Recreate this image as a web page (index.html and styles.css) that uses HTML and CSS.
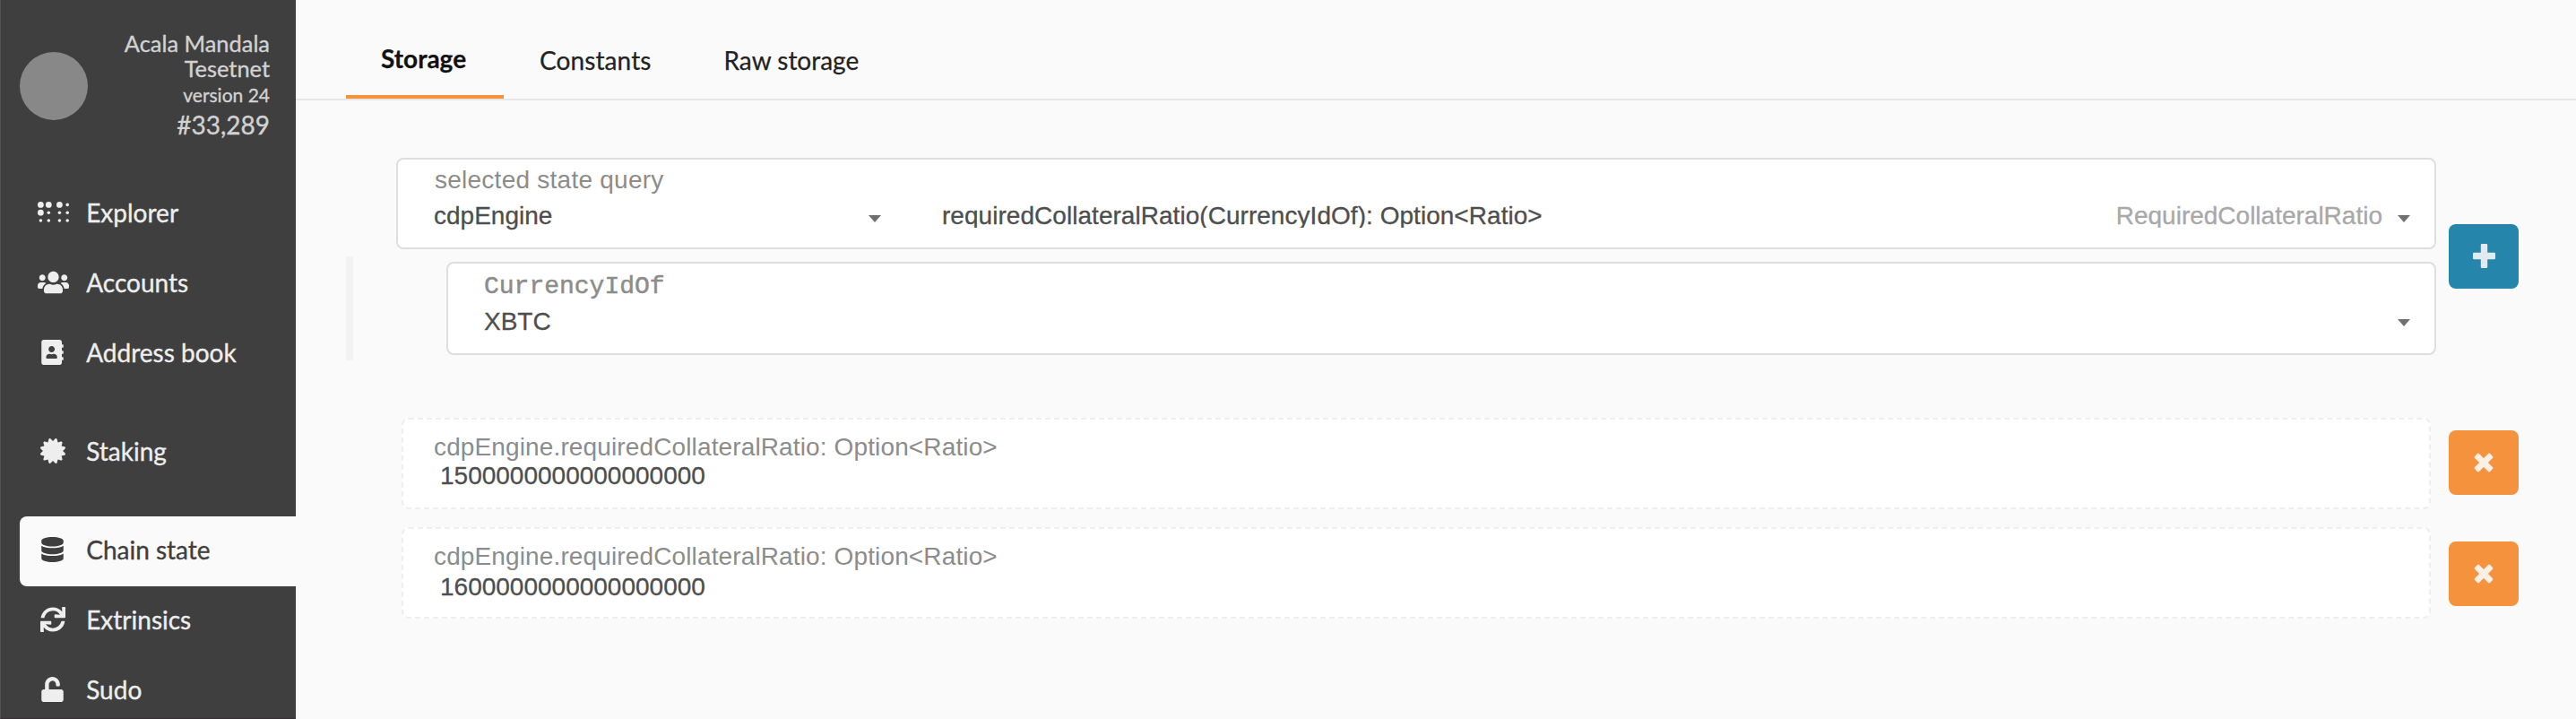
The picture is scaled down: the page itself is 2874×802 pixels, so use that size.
FILE: index.html
```html
<!DOCTYPE html>
<html lang="en">
<head>
<meta charset="utf-8">
<title>Chain state</title>
<link rel="stylesheet" href="styles.css">
</head>
<body>
<div class="app">
  <aside class="sidebar">
    <header class="chain">
      <div class="chain-logo"></div>
      <div class="chain-info">
        <div class="chain-name">Acala Mandala<br>Tesetnet</div>
        <div class="chain-version">version 24</div>
        <div class="chain-block">#33,289</div>
      </div>
    </header>
    <nav class="menu">
      <a class="item"><span class="icon"><svg width="35" height="24" viewBox="0 0 35 24"><circle cx="3.4" cy="3.4" r="3.4"/><circle cx="12.3" cy="3.4" r="3.4"/><circle cx="24.4" cy="3.4" r="3.4"/><circle cx="33.2" cy="3.4" r="1.8"/><circle cx="3.4" cy="12.2" r="3.4"/><circle cx="12.3" cy="12.2" r="1.8"/><circle cx="24.4" cy="12.2" r="1.8"/><circle cx="33.2" cy="12.2" r="1.8"/><circle cx="3.4" cy="21" r="1.8"/><circle cx="12.3" cy="21" r="1.8"/><circle cx="24.4" cy="21" r="1.8"/><circle cx="33.2" cy="21" r="1.8"/></svg></span>Explorer</a>
      <a class="item"><span class="icon"><svg width="35" height="28" viewBox="0 0 640 512"><path d="M96 224c35.3 0 64-28.700 64-64s-28.700-64-64-64-64 28.700-64 64 28.700 64 64 64zm448 0c35.300 0 64-28.700 64-64s-28.700-64-64-64-64 28.700-64 64 28.700 64 64 64zm32 32h-64c-17.600 0-33.500 7.100-45.100 18.600 40.300 22.100 68.900 62 75.100 109.400h66c17.700 0 32-14.300 32-32v-32c0-35.300-28.700-64-64-64zm-256 0c61.900 0 112-50.100 112-112S381.900 32 320 32 208 82.100 208 144s50.100 112 112 112zm76.800 32h-8.300c-20.800 10-43.900 16-68.500 16s-47.600-6-68.500-16h-8.300C179.600 288 128 339.600 128 403.200V432c0 26.500 21.500 48 48 48h288c26.500 0 48-21.500 48-48v-28.800c0-63.600-51.600-115.200-115.200-115.200zm-223.700-13.400C161.500 263.100 145.600 256 128 256H64c-35.300 0-64 28.700-64 64v32c0 17.700 14.300 32 32 32h65.900c6.300-47.400 34.900-87.300 75.200-109.400z"/></svg></span>Accounts</a>
      <a class="item"><span class="icon"><svg width="25" height="28" viewBox="0 0 448 512"><path d="M436 160c6.600 0 12-5.400 12-12v-40c0-6.600-5.400-12-12-12h-20V48c0-26.500-21.500-48-48-48H48C21.500 0 0 21.500 0 48v416c0 26.500 21.500 48 48 48h320c26.500 0 48-21.500 48-48v-48h20c6.600 0 12-5.400 12-12v-40c0-6.600-5.400-12-12-12h-20v-64h20c6.600 0 12-5.400 12-12v-40c0-6.600-5.400-12-12-12h-20v-64h20zm-228-32c35.300 0 64 28.700 64 64s-28.700 64-64 64-64-28.700-64-64 28.700-64 64-64zm112 236.800c0 10.600-10 19.200-22.400 19.200H118.400C106 384 96 375.400 96 364.800v-19.200c0-31.800 30.100-57.600 67.200-57.600h5c12.300 5.100 25.700 8 39.800 8s27.600-2.900 39.800-8h5c37.100 0 67.200 25.800 67.200 57.600v19.200z"/></svg></span>Address book</a>
      <div class="divider"></div>
      <a class="item"><span class="icon"><svg width="28" height="28" viewBox="0 0 512 512"><path d="M458.622 255.920l45.985-45.005c13.708-12.977 7.316-36.039-10.664-40.339l-62.650-15.990 17.661-62.015c4.991-17.838-11.829-34.663-29.661-29.671l-61.994 17.667-15.984-62.671C337.085.197 313.765-6.276 300.990 7.228L256 53.570 211.011 7.229c-12.630-13.351-36.047-7.234-40.325 10.668l-15.984 62.671-61.995-17.667C74.870 57.907 58.056 74.738 63.046 92.572l17.661 62.015-62.650 15.990C.069 174.878-6.310 197.944 7.392 210.915l45.985 45.005-45.985 45.004c-13.708 12.977-7.316 36.039 10.664 40.339l62.650 15.990-17.661 62.015c-4.991 17.838 11.829 34.663 29.661 29.671l61.994-17.667 15.984 62.671c4.439 18.575 27.696 24.018 40.325 10.668L256 458.610l44.989 46.001c12.500 13.488 35.987 7.486 40.325-10.668l15.984-62.671 61.994 17.667c17.836 4.994 34.651-11.837 29.661-29.671l-17.661-62.015 62.650-15.990c17.987-4.302 24.366-27.367 10.664-40.339l-45.984-45.004z"/></svg></span>Staking</a>
      <div class="divider"></div>
      <a class="item active"><span class="icon"><svg width="25" height="28" viewBox="0 0 448 512"><path d="M448 73.143v45.714C448 159.143 347.667 192 224 192S0 159.143 0 118.857V73.143C0 32.857 100.333 0 224 0s224 32.857 224 73.143zM448 176v102.857C448 319.143 347.667 352 224 352S0 319.143 0 278.857V176c48.125 33.143 136.208 48.572 224 48.572S399.874 209.143 448 176zm0 160v102.857C448 479.143 347.667 512 224 512S0 479.143 0 438.857V336c48.125 33.143 136.208 48.572 224 48.572S399.874 369.143 448 336z"/></svg></span>Chain state</a>
      <a class="item"><span class="icon"><svg width="28" height="28" viewBox="0 0 512 512"><path d="M440.650 12.570l4 82.770A247.160 247.160 0 0 0 255.830 8C134.730 8 33.910 94.920 12.290 209.820A12 12 0 0 0 24.090 224h49.050a12 12 0 0 0 11.670-9.260 175.910 175.910 0 0 1 317-56.940l-101.460-4.860a12 12 0 0 0-12.570 12v47.410a12 12 0 0 0 12 12H500a12 12 0 0 0 12-12V12a12 12 0 0 0-12-12h-47.370a12 12 0 0 0-11.980 12.570zM255.830 432a175.610 175.610 0 0 1-146-77.800l101.800 4.870a12 12 0 0 0 12.570-12v-47.400a12 12 0 0 0-12-12H12a12 12 0 0 0-12 12V500a12 12 0 0 0 12 12h47.350a12 12 0 0 0 12-12.600l-4.150-82.570A247.170 247.170 0 0 0 255.830 504c121.110 0 221.930-86.920 243.550-201.820a12 12 0 0 0-11.800-14.180h-49.050a12 12 0 0 0-11.670 9.260A175.860 175.860 0 0 1 255.830 432z"/></svg></span>Extrinsics</a>
      <a class="item"><span class="icon"><svg width="25" height="28" viewBox="0 0 448 512"><path d="M400 256H152V152.900c0-39.600 31.700-72.500 71.300-72.900 40-.4 72.700 32.100 72.700 72v16c0 13.300 10.700 24 24 24h32c13.300 0 24-10.700 24-24v-16C376 68 307.500-.3 223.500 0 139.500.3 72 69.500 72 153.500V256H48c-26.500 0-48 21.500-48 48v160c0 26.500 21.500 48 48 48h352c26.500 0 48-21.500 48-48V304c0-26.500-21.500-48-48-48z"/></svg></span>Sudo</a>
    </nav>
  </aside>
  <main class="content">
    <nav class="tabs">
      <a class="tab current">Storage</a>
      <a class="tab tab-constants">Constants</a>
      <a class="tab tab-raw">Raw storage</a>
    </nav>
    <section class="query">
      <div class="query-fields">
        <div class="field field-main">
          <div class="label label-query">selected state query</div>
          <div class="selects">
            <div class="select select-section"><span>cdpEngine</span><i class="caret"></i></div>
            <div class="select select-method"><span class="method">requiredCollateralRatio(CurrencyIdOf): Option&lt;Ratio&gt;</span><span class="hint">RequiredCollateralRatio</span><i class="caret"></i></div>
          </div>
        </div>
        <div class="params">
          <div class="field field-param">
            <div class="label label-type">CurrencyIdOf</div>
            <div class="select"><span>XBTC</span><i class="caret"></i></div>
          </div>
        </div>
      </div>
      <button class="btn btn-add" aria-label="Add"><svg width="25" height="27" viewBox="0 0 25 27"><path d="M10 0h5a1.200 1.200 0 0 1 1.200 1.200v8.600h7.600A1.200 1.200 0 0 1 25 11v5a1.200 1.200 0 0 1-1.200 1.200h-7.600v8.600A1.200 1.200 0 0 1 15 27h-5a1.200 1.200 0 0 1-1.200-1.200v-8.600H1.200A1.200 1.200 0 0 1 0 16v-5a1.200 1.200 0 0 1 1.200-1.200h7.600V1.200A1.200 1.200 0 0 1 10 0z"/></svg></button>
    </section>
    <section class="results">
      <div class="result">
        <div class="output">
          <div class="label label-result">cdpEngine.requiredCollateralRatio: Option&lt;Ratio&gt;</div>
          <div class="value">1500000000000000000</div>
        </div>
        <button class="btn btn-remove" aria-label="Remove"><svg width="22" height="22" viewBox="-11 -11 22 22"><rect x="-12" y="-3.400" width="24" height="6.800" rx="1.400" transform="rotate(45)"/><rect x="-12" y="-3.400" width="24" height="6.800" rx="1.400" transform="rotate(-45)"/></svg></button>
      </div>
      <div class="result result-second">
        <div class="output">
          <div class="label label-result">cdpEngine.requiredCollateralRatio: Option&lt;Ratio&gt;</div>
          <div class="value">1600000000000000000</div>
        </div>
        <button class="btn btn-remove" aria-label="Remove"><svg width="22" height="22" viewBox="-11 -11 22 22"><rect x="-12" y="-3.400" width="24" height="6.800" rx="1.400" transform="rotate(45)"/><rect x="-12" y="-3.400" width="24" height="6.800" rx="1.400" transform="rotate(-45)"/></svg></button>
      </div>
    </section>
  </main>
</div>
</body>
</html>
```
FILE: styles.css
```css
* { box-sizing: border-box; }

body {
  margin: 0;
  height: 802px;
  overflow: hidden;
  background: #fafafa;
  color: #4e4e4e;
  font: 28px/32px "Liberation Sans", Arial, sans-serif;
}

.app { display: flex; height: 802px; }

/* Sidebar */
.sidebar {
  flex: none;
  width: 330px;
  overflow: hidden;
  background: #3f3f3f;
  border-left: 1px solid #525252;
  border-bottom: 1px solid #302c2f;
  font-family: Lato, sans-serif;
  -webkit-text-stroke: 0.35px currentColor;
}

.chain {
  display: flex;
  justify-content: space-between;
  height: 200px;
  padding: 34px 29px 0 21px;
  color: #d2d2d2;
  text-align: right;
}

.chain-logo {
  width: 76px;
  height: 76px;
  margin-top: 24px;
  border-radius: 50%;
  background: #888;
}

.chain-name { font-size: 25.400px; line-height: 28px; }
.chain-version { padding-top: 2px; font-size: 21px; line-height: 28px; }
.chain-block { font-size: 28px; line-height: 38px; }

.item {
  display: flex;
  align-items: center;
  height: 78px;
  margin-left: 21px;
  padding: 0 0 4px 20px;
  border-radius: 8px 0 0 8px;
  color: #eee;
}

.item.active { background: #fafafa; color: #3f3f3f; }

.divider { height: 32px; }

.icon {
  display: flex;
  width: 33px;
  margin-right: 21.200px;
}

.icon svg { flex: none; margin: 0 auto; fill: currentColor; }

/* Main column */
.content { flex: 1; }

.tabs {
  display: flex;
  height: 112px;
  padding-left: 56px;
  border-bottom: 2px solid #e6e6e6;
  font-family: Lato, sans-serif;
  color: #222;
  -webkit-text-stroke: 0.25px currentColor;
}

.tab { height: 110px; padding: 51px 39px 0; }
.tab-constants { margin-left: 1px; letter-spacing: 0.1px; }
.tab-raw { margin-left: 3px; }

.tab.current {
  width: 176px;
  padding-top: 49px;
  border-bottom: 4px solid #f5923e;
  color: #111;
  font-weight: 700;
}

.query {
  display: flex;
  align-items: flex-start;
  gap: 14px;
  padding: 64px 64px 0 56px;
}

.query-fields { flex: 1; }

.field {
  background: #fff;
  border: 2px solid #dedede;
  border-radius: 8px;
}

.field-main { height: 102px; margin-left: 56px; padding: 7px 27px 0 40px; }

.label { color: #8c8c8c; white-space: nowrap; }
.label-query { padding-left: 1px; letter-spacing: 0.25px; }

.selects { display: flex; padding-top: 8px; }
.select { display: flex; align-items: center; white-space: nowrap; -webkit-text-stroke: 0.3px currentColor; }
.select-section { width: 499px; }
.select-method { flex: 1; margin-left: 68px; letter-spacing: 0.04px; }
.method, .hint { clip-path: inset(0 0 3px); }
.hint { margin: 0 17px 0 auto; color: #a8a8a8; letter-spacing: 0; }

.caret {
  margin: 6px 0 0 auto;
  border: 7px solid transparent;
  border-top: 8px solid #707070;
  border-bottom: 0;
}

.hint + .caret { margin-left: 0; }

.params {
  margin-top: 8px;
  padding: 6px 0 6px 104px;
  border-left: 8px solid #f2f2f2;
}

.field-param { height: 104px; padding: 12px 27px 0 40px; }
.label-type { font-family: "Liberation Mono", monospace; line-height: 28px; -webkit-text-stroke: 0.5px currentColor; }
.field-param .select { padding-top: 9px; }
.field-param .caret { margin-top: 2px; }

.btn {
  display: flex;
  flex: none;
  align-items: center;
  justify-content: center;
  width: 78px;
  height: 72px;
  padding: 0;
  border: 0;
  border-radius: 8px;
}

.btn-add { margin-top: 74px; padding-bottom: 1px; background: #2685ab; fill: #e0eaf0; }
.btn-remove { background: #f5923e; fill: #fbefe6; }

.results { padding: 64px 64px 0 118px; }
.result { display: flex; gap: 20px; align-items: flex-start; height: 122px; }
.result .btn { margin-top: 14px; }
.result-second .btn { margin-top: 16px; }

.output {
  flex: 1;
  height: 102px;
  padding: 15px 34px;
  background: #fff;
  border: 2px dashed #eee;
  border-radius: 8px;
}

.label-result { letter-spacing: 0.13px; }
.value { padding-left: 7px; -webkit-text-stroke: 0.3px currentColor; }
.result-second .value { padding-top: 2px; }
```
